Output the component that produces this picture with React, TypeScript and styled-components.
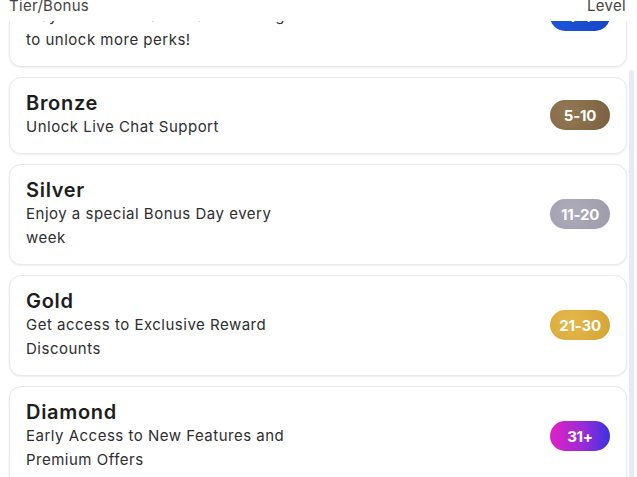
import React, { useEffect, useRef } from 'react';
import styled, { createGlobalStyle } from 'styled-components';

const GlobalStyle = createGlobalStyle`
  html, body {
    margin: 0;
    padding: 0;
    background: #ffffff;
    overflow: hidden;
  }
  body {
    font-family: Inter, 'Noto Sans', sans-serif;
    color: #222;
  }
`;

const Page = styled.div`
  display: flex;
  flex-direction: column;
  height: 100vh;
`;

const HeaderRow = styled.div`
  display: flex;
  justify-content: space-between;
  align-items: flex-end;
  margin-top: -4px;
  padding: 0 11px 5px 9px;
  height: 25px;
  box-sizing: border-box;
  flex-shrink: 0;
  font-size: 15px;
  line-height: 20px;
  color: #444;
`;

const HeaderLabel = styled.span`
  letter-spacing: 0.3px;
`;

const Body = styled.div`
  display: flex;
  height: 466px;
  flex-shrink: 0;
`;

const ScrollArea = styled.div`
  flex: 1;
  overflow: hidden;
  padding: 0 1px 0 9px;
`;

const ScrollTrack = styled.div`
  width: 9px;
  flex-shrink: 0;
  padding: 0 3px 0 1px;
  box-sizing: border-box;
`;

const ScrollThumb = styled.div`
  height: 420px;
  border-radius: 3px;
  background: #e6ecf7;
`;

const List = styled.div`
  display: flex;
  flex-direction: column;
  gap: 10px;
`;

const Card = styled.div`
  display: flex;
  align-items: center;
  justify-content: space-between;
  padding: 13px 16px 14px 16px;
  border: 1px solid #e9e9e9;
  border-radius: 12px;
  background: #fff;
  box-shadow: 0 1px 2px rgba(0, 0, 0, 0.07);
`;

const Info = styled.div`
  display: flex;
  flex-direction: column;
`;

const Title = styled.div`
  font-size: 20px;
  line-height: 24px;
  font-weight: 600;
  color: #1d1d1d;
  letter-spacing: 0.7px;
`;

const Desc = styled.div`
  font-size: 15px;
  line-height: 24px;
  color: #2e2e2e;
  max-width: 265px;
  letter-spacing: 0.5px;
`;

const Badge = styled.div<{ $bg: string }>`
  width: 60px;
  height: 30px;
  border-radius: 15px;
  display: flex;
  align-items: center;
  justify-content: center;
  flex-shrink: 0;
  background: ${(p) => p.$bg};
  color: #fff;
  font-size: 15px;
  font-weight: 700;
  letter-spacing: -0.2px;
`;

type TTier = {
  name: string;
  desc: string;
  level: string;
  bg: string;
};

const tiers: TTier[] = [
  {
    name: 'Starter',
    desc: 'Play more often and start climbing to unlock more perks!',
    level: '1-4',
    bg: 'linear-gradient(90deg, #1d55d8, #1546c8)',
  },
  {
    name: 'Bronze',
    desc: 'Unlock Live Chat Support',
    level: '5-10',
    bg: 'radial-gradient(circle at 30% 40%, #927852, #7b6040)',
  },
  {
    name: 'Silver',
    desc: 'Enjoy a special Bonus Day every week',
    level: '11-20',
    bg: 'radial-gradient(circle at 35% 40%, #aeabbb, #9d9aab)',
  },
  {
    name: 'Gold',
    desc: 'Get access to Exclusive Reward Discounts',
    level: '21-30',
    bg: 'radial-gradient(circle at 35% 40%, #e4b848, #d4a436)',
  },
  {
    name: 'Diamond',
    desc: 'Early Access to New Features and Premium Offers',
    level: '31+',
    bg: 'linear-gradient(90deg, #e021c4, #9b2bd6 55%, #3a32e2)',
  },
];

function App() {
  const scrollRef = useRef<HTMLDivElement>(null);

  useEffect(() => {
    if (scrollRef.current) {
      scrollRef.current.scrollTop = scrollRef.current.scrollHeight;
    }
  }, []);

  return (
    <Page>
      <GlobalStyle />
      <HeaderRow>
        <HeaderLabel>Tier/Bonus</HeaderLabel>
        <HeaderLabel>Level</HeaderLabel>
      </HeaderRow>
      <Body>
        <ScrollArea ref={scrollRef}>
          <List>
            {tiers.map((tier) => (
              <Card key={tier.name}>
                <Info>
                  <Title>{tier.name}</Title>
                  <Desc>{tier.desc}</Desc>
                </Info>
                <Badge $bg={tier.bg}>{tier.level}</Badge>
              </Card>
            ))}
          </List>
        </ScrollArea>
        <ScrollTrack>
          <ScrollThumb style={{ marginTop: 49 }} />
        </ScrollTrack>
      </Body>
    </Page>
  );
}

export default App;
